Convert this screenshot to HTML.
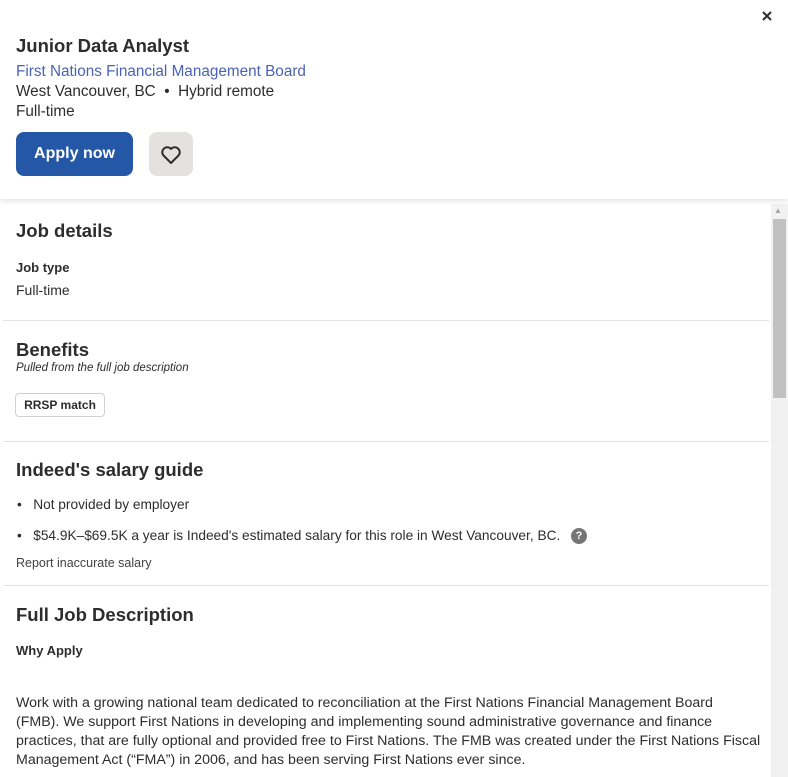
<!DOCTYPE html>
<html><head><style>
body{margin:0;width:788px;height:777px;overflow:hidden;background:#fff;font-family:"Liberation Sans",sans-serif;color:#2d2d2d;position:relative}
.a{position:absolute;white-space:nowrap}
.h{font-size:18.5px;font-weight:bold}
.t{font-size:15.3px}
.line{position:absolute;left:3px;width:766px;height:1px;background:#e4e2e0}
</style></head><body>
<div style="position:absolute;left:0;top:0;width:788px;height:199px;background:#fff;box-shadow:0 2px 5px rgba(0,0,0,.12);z-index:2">
<svg class="a" style="left:762px;top:11px" width="10" height="10" viewBox="0 0 10 10"><path d="M1 1L9 9M9 1L1 9" stroke="#2d2d2d" stroke-width="2"/></svg>
<div class="a h" style="left:16px;top:35px">Junior Data Analyst</div>
<div class="a t" style="left:16px;top:63px;color:#4a62b6">First Nations Financial Management Board</div>
<div class="a t" style="left:16px;top:83px">West Vancouver, BC &nbsp;•&nbsp; Hybrid remote</div>
<div class="a t" style="left:16px;top:103px">Full-time</div>
<div class="a" style="left:16px;top:132px;width:117px;height:44px;background:#2557a7;border-radius:8px;color:#fff;font-weight:bold;font-size:16px;line-height:44px;text-align:center">Apply now</div>
<div class="a" style="left:149px;top:132px;width:44px;height:44px;background:#e4e2e0;border-radius:8px">
<svg width="44" height="44" viewBox="0 0 44 44"><path d="M22 31 L14.5 23.5 A4.6 4.6 0 0 1 22 17 A4.6 4.6 0 0 1 29.5 23.5 Z" fill="none" stroke="#2d2d2d" stroke-width="2" stroke-linejoin="round"/></svg></div>
</div>
<div style="position:absolute;left:771px;top:204px;width:17px;height:573px;background:#f1f1f1"></div>
<div style="position:absolute;left:773px;top:219px;width:13px;height:179px;background:#c1c1c1"></div>
<div class="a" style="left:774px;top:206px;font-size:8px;color:#a3a3a3">▲</div>
<div class="a h" style="left:16px;top:220px">Job details</div>
<div class="a" style="left:16px;top:260px;font-size:13px;font-weight:bold">Job type</div>
<div class="a" style="left:16px;top:282px;font-size:14px">Full-time</div>
<div class="line" style="top:320px"></div>
<div class="a h" style="left:16px;top:339px">Benefits</div>
<div class="a" style="left:16px;top:362px;font-size:11.5px;font-style:italic">Pulled from the full job description</div>
<div class="a" style="left:15px;top:393px;width:88px;height:22px;border:1px solid #d4d2d0;border-radius:4px;font-size:12px;font-weight:bold;line-height:22px;text-align:center">RRSP match</div>
<div class="line" style="top:441px"></div>
<div class="a h" style="left:16px;top:459px">Indeed's salary guide</div>
<div class="a" style="left:17px;top:497px;font-size:13.7px">•&nbsp;&nbsp; Not provided by employer</div>
<div class="a" style="left:17px;top:528px;font-size:13.7px">•&nbsp;&nbsp; $54.9K–$69.5K a year is Indeed's estimated salary for this role in West Vancouver, BC.</div>
<div class="a" style="left:571px;top:528px;width:16px;height:16px;border-radius:50%;background:#767676;color:#fff;font-size:11px;font-weight:bold;text-align:center;line-height:16px">?</div>
<div class="a" style="left:16px;top:556px;font-size:12.5px;color:#424242">Report inaccurate salary</div>
<div class="line" style="top:585px"></div>
<div class="a h" style="left:16px;top:604px">Full Job Description</div>
<div class="a" style="left:16px;top:643px;font-size:13px;font-weight:bold">Why Apply</div>
<div class="a" style="left:16px;top:694px;font-size:14.2px;line-height:19px">Work with a growing national team dedicated to reconciliation at the First Nations Financial Management Board<br>(FMB). We support First Nations in developing and implementing sound administrative governance and finance<br>practices, that are fully optional and provided free to First Nations. The FMB was created under the First Nations Fiscal<br>Management Act (“FMA”) in 2006, and has been serving First Nations ever since.</div>
</body></html>
